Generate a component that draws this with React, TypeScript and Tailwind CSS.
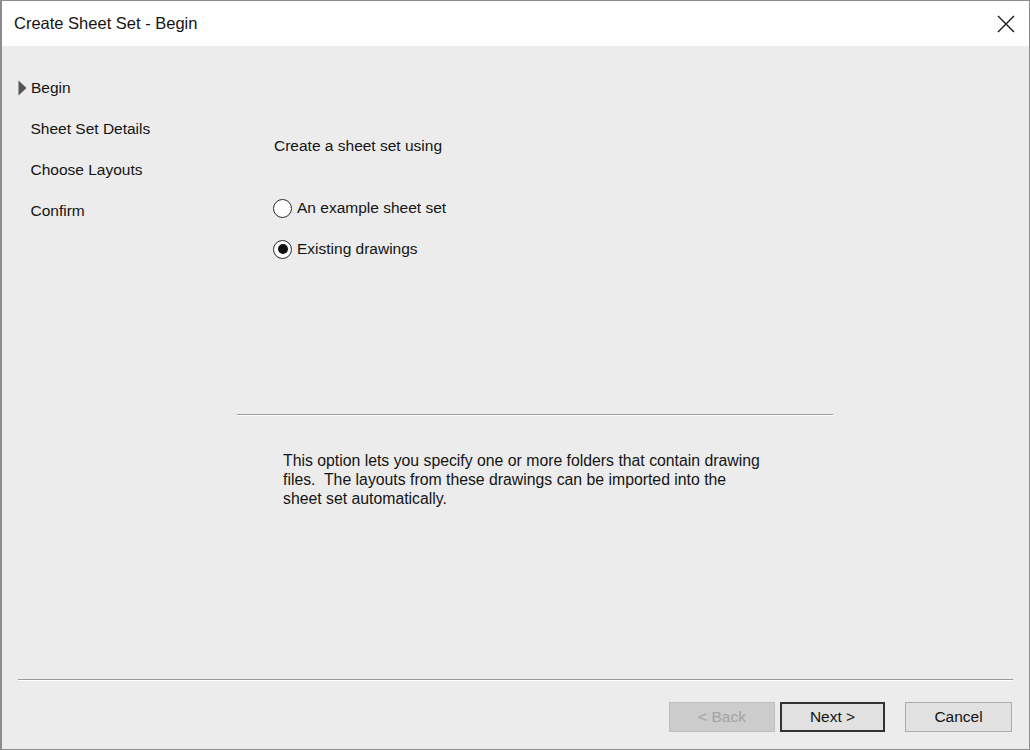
import React, { useState } from "react";

const font = { fontFamily: '"Liberation Sans", Arial, sans-serif' };

const steps = ["Begin", "Sheet Set Details", "Choose Layouts", "Confirm"];

const Radio: React.FC<{ checked: boolean; label: string; onClick: () => void }> = ({ checked, label, onClick }) => (
  <button onClick={onClick} className="flex items-center h-[20px] text-left">
    <span className="w-[19px] h-[19px] rounded-full border border-[#2a2a2a] bg-white flex items-center justify-center -ml-[1px]">
      {checked && <span className="w-[10px] h-[10px] rounded-full bg-[#111]" />}
    </span>
    <span className="ml-[5px] text-[15.5px] text-[#141414] leading-[20px]">{label}</span>
  </button>
);

const CreateSheetSet: React.FC = () => {
  const [choice, setChoice] = useState<"example" | "existing">("existing");

  return (
    <div style={font} className="w-[1030px] h-[750px] flex flex-col bg-[#ececec] border border-[#8c8c8c] border-l-2 select-none">
      {/* title bar */}
      <div className="h-[45px] bg-white flex items-center justify-between pl-[12px] pr-[12px] shrink-0">
        <span className="text-[16.5px] text-[#141414]">Create Sheet Set - Begin</span>
        <svg width="18" height="18" viewBox="0 0 18 18" className="mr-[2px]">
          <path d="M1 1 L17 17 M17 1 L1 17" stroke="#1a1a1a" strokeWidth="1.4" fill="none" />
        </svg>
      </div>

      <div className="flex flex-1">
        {/* step list */}
        <div className="w-[235px] pl-[16px] pt-[21px] shrink-0">
          {steps.map((s, i) => (
            <div key={s} className="flex items-center h-[41px]">
              <span className="w-[13px] flex items-center">
                {i === 0 && (
                  <svg width="9" height="16" viewBox="0 0 9 16">
                    <path d="M0.5 0.5 L8.5 8 L0.5 15.5 Z" fill="#555" />
                  </svg>
                )}
              </span>
              <span className={`text-[15.5px] text-[#141414] ${i === 0 ? "" : "-ml-[0.5px]"}`}>{s}</span>
            </div>
          ))}
        </div>

        {/* page content */}
        <div className="w-[596px] flex flex-col">
          <div className="pl-[37px] pt-[90px]">
            <div className="text-[15.5px] text-[#141414] leading-[20px]">Create a sheet set using</div>
            <div className="mt-[42px] flex flex-col gap-[21px]">
              <Radio checked={choice === "example"} label="An example sheet set" onClick={() => setChoice("example")} />
              <Radio checked={choice === "existing"} label="Existing drawings" onClick={() => setChoice("existing")} />
            </div>
          </div>
          <div className="mt-[155px] border-t border-[#9a9a9a] border-b border-b-white" />
          <div className="pl-[46px] pt-[35px] text-[15.8px] leading-[19px] text-[#141414]">
            This option lets you specify one or more folders that contain drawing
            <br />
            files.&nbsp; The layouts from these drawings can be imported into the
            <br />
            sheet set automatically.
          </div>
        </div>
      </div>

      {/* footer */}
      <div className="mx-[16px] border-t border-[#9a9a9a] border-b border-b-white" />
      <div className="h-[68px] flex items-start justify-end pt-[21px] pr-[17px] shrink-0">
        <button disabled className="w-[106px] h-[30px] bg-[#cccccc] border border-[#bfbfbf] text-[15.5px] text-[#a3a3a3]">
          &lt; Back
        </button>
        <button className="ml-[5px] w-[105px] h-[30px] bg-[#e1e1e1] border-2 border-[#333] text-[15.5px] text-[#141414]">
          Next &gt;
        </button>
        <button className="ml-[20px] w-[107px] h-[30px] bg-[#e1e1e1] border border-[#adadad] text-[15.5px] text-[#141414]">
          Cancel
        </button>
      </div>
    </div>
  );
};

export default function App() {
  return <CreateSheetSet />;
}
